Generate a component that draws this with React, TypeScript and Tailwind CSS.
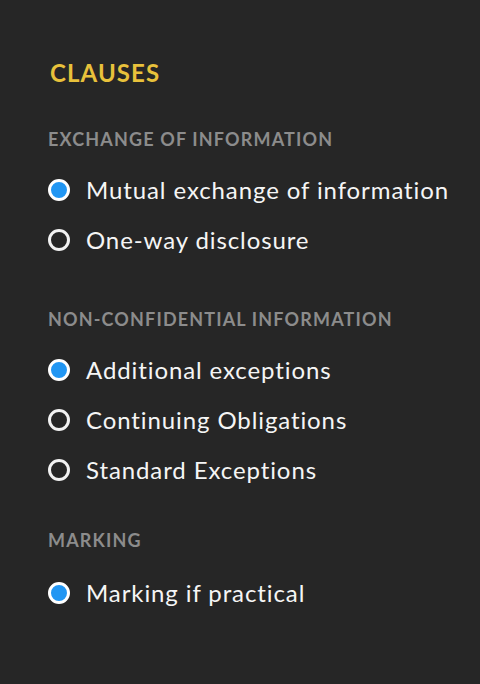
import React from "react";

type Item = { label: string; checked: boolean };
type Section = { title: string; items: Item[]; mt: string; itemsMt: string };

const sections: Section[] = [
  {
    title: "EXCHANGE OF INFORMATION",
    mt: "mt-[41px]",
    itemsMt: "mt-[26px]",
    items: [
      { label: "Mutual exchange of information", checked: true },
      { label: "One-way disclosure", checked: false },
    ],
  },
  {
    title: "NON-CONFIDENTIAL INFORMATION",
    mt: "mt-[54px]",
    itemsMt: "mt-[26px]",
    items: [
      { label: "Additional exceptions", checked: true },
      { label: "Continuing Obligations", checked: false },
      { label: "Standard Exceptions", checked: false },
    ],
  },
  {
    title: "MARKING",
    mt: "mt-[45px]",
    itemsMt: "mt-[28px]",
    items: [{ label: "Marking if practical", checked: true }],
  },
];

function Radio({ checked }: { checked: boolean }) {
  return (
    <span
      className={
        checked
          ? "w-[22px] h-[22px] rounded-full border-[3px] border-white bg-[#2196f3] shrink-0"
          : "w-[22px] h-[22px] rounded-full border-[3px] border-[#f2f2f2] bg-transparent shrink-0"
      }
    />
  );
}

export default function App() {
  return (
    <div
      className="w-[480px] h-[684px] bg-[#262626] pl-[48px] pt-[58px]"
      style={{ fontFamily: "Lato, 'Open Sans', sans-serif" }}
    >
      <h1 className="text-[24px] leading-[29px] font-bold tracking-[1.1px] text-[#e8c13b] pl-[2px]">
        CLAUSES
      </h1>
      {sections.map((s) => (
        <div key={s.title} className={s.mt}>
          <h2 className="text-[18px] leading-[22px] font-bold tracking-[1.15px] text-[#8c8c8c]">
            {s.title}
          </h2>
          <div className={`${s.itemsMt} flex flex-col gap-[22px]`}>
            {s.items.map((it) => (
              <div key={it.label} className="flex items-center gap-[16px]">
                <Radio checked={it.checked} />
                <span className="text-[24px] leading-[28px] tracking-[0.9px] text-[#f5f5f5]">
                  {it.label}
                </span>
              </div>
            ))}
          </div>
        </div>
      ))}
    </div>
  );
}
